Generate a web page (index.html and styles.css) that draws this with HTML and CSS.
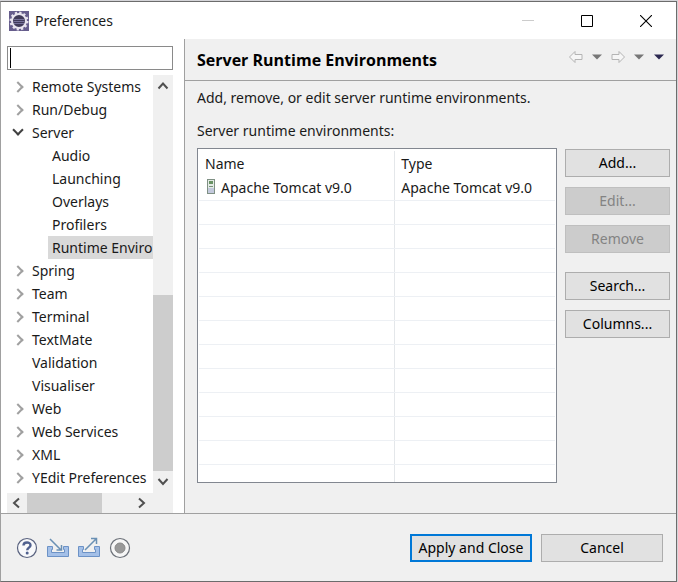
FILE: index.html
```html
<!DOCTYPE html>
<html lang="en">
<head>
<meta charset="utf-8">
<title>Preferences</title>
<link rel="stylesheet" href="styles.css">
</head>
<body>
<div class="window">
  <header class="titlebar">
    <svg class="app-icon" width="20" height="20" viewBox="0 0 20 20" aria-hidden="true">
      <rect width="20" height="20" fill="#665d8c"/>
      <circle cx="10" cy="10" r="8" fill="none" stroke="#e8e4ee" stroke-width="3" stroke-dasharray="2.1 2.088"/>
      <circle cx="10" cy="10" r="7" fill="#403a58" stroke="#e8e4ee" stroke-width="2"/>
      <path d="M5 8.500h10M4.500 10.500h11M5 12.500h10" stroke="#77729a" stroke-width="1"/>
    </svg>
    <h1 class="title">Preferences</h1>
    <div class="window-controls">
      <button class="window-button" aria-label="Minimize" disabled><svg width="12" height="12" viewBox="0 0 12 12"><path d="M0 5.500h12" stroke="#ccc"/></svg></button>
      <button class="window-button" aria-label="Maximize"><svg width="12" height="12" viewBox="0 0 12 12"><path d="M.5.500h11v11H.5z" fill="none" stroke="#000"/></svg></button>
      <button class="window-button" aria-label="Close"><svg width="12" height="12" viewBox="0 0 12 12"><path d="M0 0l12 12M12 0L0 12" stroke="#000" stroke-width="1.100"/></svg></button>
    </div>
  </header>

  <div class="content">
    <aside class="sidebar">
      <input class="filter" type="text" aria-label="Filter">
      <div class="tree-pane">
        <ul class="tree">
          <li class="node closed">Remote Systems</li>
          <li class="node closed">Run/Debug</li>
          <li class="node open">Server</li>
          <li class="node child"><span class="label">Audio</span></li>
          <li class="node child"><span class="label">Launching</span></li>
          <li class="node child"><span class="label">Overlays</span></li>
          <li class="node child"><span class="label">Profilers</span></li>
          <li class="node child selected"><span class="label">Runtime Environments</span></li>
          <li class="node closed">Spring</li>
          <li class="node closed">Team</li>
          <li class="node closed">Terminal</li>
          <li class="node closed">TextMate</li>
          <li class="node">Validation</li>
          <li class="node">Visualiser</li>
          <li class="node closed">Web</li>
          <li class="node closed">Web Services</li>
          <li class="node closed">XML</li>
          <li class="node closed">YEdit Preferences</li>
        </ul>
        <div class="scroll-y">
          <svg class="arrow" viewBox="0 0 20 22"><path d="M5.500 13.500l4.500-5 4.500 5" /></svg>
          <div class="track"><div class="thumb"></div></div>
          <svg class="arrow" viewBox="0 0 20 22"><path d="M5.500 8l4.500 5 4.500-5" /></svg>
        </div>
        <div class="scroll-x">
          <svg class="arrow" viewBox="0 0 20 20"><path d="M12 5.500L7 10l5 4.500" /></svg>
          <div class="track"><div class="thumb"></div></div>
          <svg class="arrow" viewBox="0 0 20 20"><path d="M6 5.500l5 4.500-5 4.500" /></svg>
        </div>
      </div>
    </aside>

    <main class="page">
      <div class="page-header">
        <h2 class="page-title">Server Runtime Environments</h2>
        <div class="history">
          <button class="tool" aria-label="Back"><svg width="16" height="14" viewBox="0 0 16 14"><path d="M1.500 7l5.500-5.500v3h7v5H7v3z" fill="#f6f6f6" stroke="#b4b4b4"/></svg></button>
          <button class="tool" aria-label="Back history"><svg width="10" height="6" viewBox="0 0 10 6"><path d="M0 .5h10L5 5.500z" fill="#777"/></svg></button>
          <button class="tool" aria-label="Forward"><svg width="16" height="14" viewBox="0 0 16 14"><path d="M14.500 7L9 1.500v3H2v5h7v3z" fill="#f6f6f6" stroke="#b4b4b4"/></svg></button>
          <button class="tool" aria-label="Forward history"><svg width="10" height="6" viewBox="0 0 10 6"><path d="M0 .5h10L5 5.500z" fill="#777"/></svg></button>
          <button class="tool view-menu" aria-label="View menu"><svg width="10" height="6" viewBox="0 0 10 6"><path d="M0 .5h10L5 5.500z" fill="#2b2850"/></svg></button>
        </div>
      </div>
      <div class="page-body">
        <p class="text">Add, remove, or edit server runtime environments.</p>
        <p class="text" id="list-label">Server runtime environments:</p>
        <div class="list">
          <div class="table-box">
            <table class="table" aria-labelledby="list-label">
              <thead><tr><th>Name</th><th>Type</th></tr></thead>
              <tbody>
                <tr><td><svg class="server-icon" width="8" height="16" viewBox="0 0 8 16"><rect x=".5" y=".5" width="7" height="14" fill="#e4ebe6" stroke="#7f9084"/><rect x="2" y="2" width="4" height="3" fill="#699264"/><path d="M2 7.500h4" stroke="#78917b"/><rect x="1" y="9" width="6" height="5" fill="#c3c9dc"/></svg>Apache Tomcat v9.0</td><td>Apache Tomcat v9.0</td></tr>
                <tr><td></td><td></td></tr>
                <tr><td></td><td></td></tr>
                <tr><td></td><td></td></tr>
                <tr><td></td><td></td></tr>
                <tr><td></td><td></td></tr>
                <tr><td></td><td></td></tr>
                <tr><td></td><td></td></tr>
                <tr><td></td><td></td></tr>
                <tr><td></td><td></td></tr>
                <tr><td></td><td></td></tr>
                <tr><td></td><td></td></tr>
                <tr><td></td><td></td></tr>
              </tbody>
            </table>
          </div>
          <div class="actions">
            <button class="button">Add...</button>
            <button class="button" disabled>Edit...</button>
            <button class="button" disabled>Remove</button>
            <button class="button group">Search...</button>
            <button class="button">Columns...</button>
          </div>
        </div>
      </div>
    </main>
  </div>

  <footer class="footer">
    <div class="footer-tools">
      <button class="tool" aria-label="Help"><svg width="22" height="22" viewBox="0 0 22 22"><circle cx="11" cy="11" r="9.500" fill="#f8f9fb" stroke="#59627f" stroke-width="1.200"/><path d="M7.500 8.500C7.500 4.500 14.500 4.500 14.500 8.200c0 2.300-3.300 2.500-3.300 5" fill="none" stroke="#50618f" stroke-width="2.400"/><circle cx="11.200" cy="16" r="1.500" fill="#50618f"/></svg></button>
      <button class="tool" aria-label="Import"><svg width="22" height="22" viewBox="0 0 22 22"><path d="M.5 9.500h5v3h-1v3h13v-3h-1v-3h5v10H.5z" fill="#a4c0e8" stroke="#6c92c6"/><path d="M3 2l11 11M14.500 8v5H9.500" fill="none" stroke="#6a90b4" stroke-width="1.500"/></svg></button>
      <button class="tool" aria-label="Export"><svg width="22" height="22" viewBox="0 0 22 22"><path d="M.5 9.500h5v3h-1v3h13v-3h-1v-3h5v10H.5z" fill="#a4c0e8" stroke="#6c92c6"/><path d="M7 13L18 2M13 1.500h5.500V7" fill="none" stroke="#6a90b4" stroke-width="1.500"/></svg></button>
      <button class="tool" aria-label="Record"><svg width="22" height="22" viewBox="0 0 22 22"><circle cx="11" cy="11" r="9.500" fill="#f6f6f6" stroke="#6b7078" stroke-width="1.200"/><circle cx="11" cy="11" r="5" fill="#999" stroke="#888"/></svg></button>
    </div>
    <div class="footer-actions">
      <button class="button wide primary">Apply and Close</button>
      <button class="button wide">Cancel</button>
    </div>
  </footer>
</div>
</body>
</html>
```
FILE: styles.css
```css
*, ::before { box-sizing: border-box; }

body {
  margin: 0;
  padding: 1px 1px 0 0;
  height: 100vh;
  background: #d4d4d8;
  color: #1a1a1a;
  font: 14px/23px "Noto Sans", "Open Sans", sans-serif;
}

h1, h2, p, ul { margin: 0; padding: 0; font-size: inherit; font-weight: inherit; }
ul { list-style: none; }
button, input { font: inherit; color: inherit; }
svg { display: block; }

.window {
  display: flex;
  flex-direction: column;
  height: 100%;
  border: 1px solid #6c6c6c;
  border-left-color: #a0a0a0;
  background: #f0f0f0;
}

.titlebar {
  display: flex;
  align-items: center;
  height: 37px;
  padding: 0 1px 0 8px;
  background: #fff;
}
.title { margin-left: 6px; }
.window-controls { display: flex; margin-left: auto; }
.window-button {
  display: grid;
  place-items: center;
  width: 59px;
  height: 36px;
  padding: 0;
  border: 0;
  background: none;
}

.content { display: flex; flex: 1; min-height: 0; }

.sidebar {
  display: flex;
  flex-direction: column;
  width: 184px;
  padding: 7px 11px 0 6px;
  border-right: 1px solid #a0a0a0;
  background: #fff;
}
.filter {
  width: 100%;
  height: 24px;
  padding: 0 2px;
  border: 1px solid #8a8a8a;
  border-radius: 0;
  outline: 0;
  background: linear-gradient(#000, #000) 2px center / 1px 20px no-repeat #fff;
}
.tree-pane {
  display: grid;
  grid-template: minmax(0, 1fr) 20px / minmax(0, 1fr) 20px;
  flex: 1;
  min-height: 0;
  margin-top: 5px;
}
.tree { overflow: hidden; }
.node {
  display: flex;
  align-items: center;
  height: 23px;
  padding-left: 25px;
  white-space: nowrap;
}
.closed, .open { padding-left: 7px; }
.closed::before, .open::before {
  content: "";
  flex: none;
  width: 8px;
  height: 8px;
  margin-right: 10px;
  border: solid #a0a0a0;
  border-width: 2px 2px 0 0;
  transform: rotate(45deg);
}
.open::before { margin-bottom: 5px; border-color: #404040; transform: rotate(135deg); }
.child { padding-left: 41px; }
.label { padding: 0 4px; }
.selected .label { background: #d9d9d9; }

.arrow { fill: none; stroke: #505050; stroke-width: 2; }
.scroll-y, .scroll-x { display: flex; background: #f0f0f0; }
.scroll-y { flex-direction: column; }
.scroll-y .arrow { width: 20px; height: 22px; }
.scroll-x { grid-column: 1 / 3; }
.scroll-x .arrow { width: 20px; height: 20px; }
.scroll-x { padding-right: 20px; }
.track { display: flex; flex: 1; }
.scroll-y .track { flex-direction: column; justify-content: flex-end; }
.thumb { background: #cdcdcd; }
.scroll-y .thumb { height: 47%; }
.scroll-x .thumb { width: 71%; }

.page { display: flex; flex: 1; flex-direction: column; min-width: 0; }
.page-header {
  display: flex;
  align-items: center;
  justify-content: space-between;
  height: 42px;
  padding: 2px 12px 0;
  border-bottom: 1px solid #a0a0a0;
}
.page-title { font-family: "Open Sans", sans-serif; font-size: 16px; font-weight: 700; color: #000; }
.history { display: flex; align-items: center; gap: 8px; padding-bottom: 8px; }
.tool { padding: 0; border: 0; background: none; }
.view-menu { margin-left: 2px; }

.page-body {
  display: flex;
  flex: 1;
  flex-direction: column;
  gap: 10px;
  min-height: 0;
  padding: 5px 6px 30px 12px;
}
.list { display: flex; flex: 1; gap: 8px; min-height: 0; margin-top: -4px; }
.table-box {
  flex: 1;
  min-width: 0;
  padding: 2px 1px;
  overflow: hidden;
  border: 1px solid #828790;
  background: #fff;
}
.table { width: 100%; border-collapse: collapse; table-layout: fixed; }
.table th, .table td {
  height: 24px;
  padding: 0 6px;
  border-bottom: 1px solid #edf0f4;
  text-align: left;
  font-weight: 400;
  line-height: 23px;
  white-space: nowrap;
}
.table th { height: 25px; border-bottom: 0; }
.table th:first-child, .table td:first-child {
  width: 55%;
  border-right: 1px solid #e4e7ea;
}
.server-icon { display: inline-block; margin: 0 6px 0 2px; vertical-align: -2px; }

.actions { display: flex; flex-direction: column; gap: 10px; width: 105px; padding-top: 1px; }
.button {
  height: 28px;
  padding: 0;
  border: 1px solid #adadad;
  background: #e1e1e1;
  color: #000;
  line-height: 24px;
}
.button:disabled { border-color: #bfbfbf; background: #ccc; color: #838383; }
.group { margin-top: 9px; }

.footer {
  display: flex;
  align-items: center;
  justify-content: space-between;
  height: 68px;
  padding: 0 13px 0 15px;
  border-top: 1px solid #a0a0a0;
}
.footer-tools, .footer-actions { display: flex; gap: 9px; }
.wide { width: 122px; }
.primary { border: 2px solid #0078d7; }
```
